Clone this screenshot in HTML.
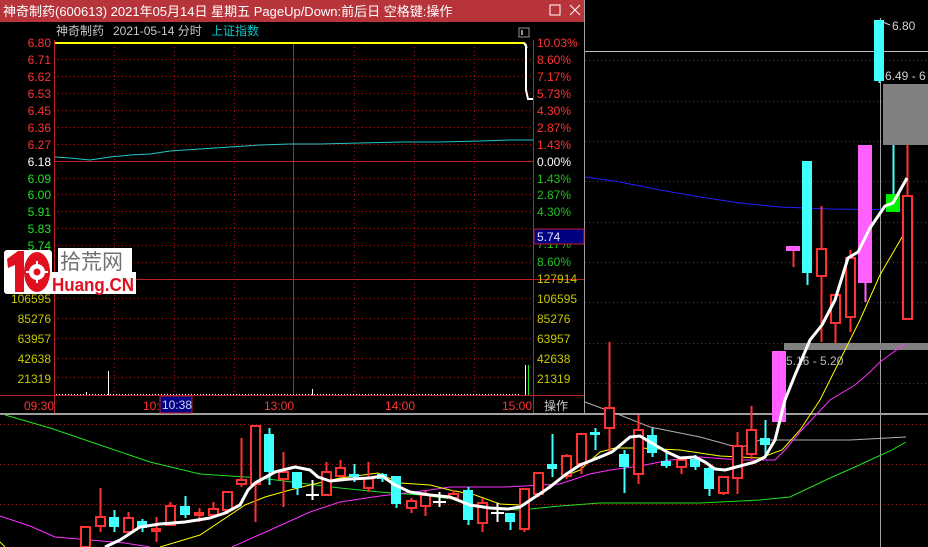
<!DOCTYPE html>
<html><head><meta charset="utf-8"><style>
html,body{margin:0;padding:0;background:#000;width:928px;height:547px;overflow:hidden}
svg{display:block}
text{font-family:"Liberation Sans","Noto Sans CJK SC",sans-serif;font-size:12px}
</style></head><body>
<svg id="s" width="928" height="547" xmlns="http://www.w3.org/2000/svg">
<rect width="928" height="547" fill="#000"/>
<g id="grid" stroke="#a01818" stroke-dasharray="1,3" stroke-width="1">
<line x1="585" y1="60.5" x2="928" y2="60.5"/><line x1="585" y1="101.5" x2="928" y2="101.5"/>
<line x1="585" y1="141.5" x2="928" y2="141.5"/><line x1="585" y1="181.5" x2="928" y2="181.5"/>
<line x1="585" y1="222.5" x2="928" y2="222.5"/><line x1="585" y1="262.5" x2="928" y2="262.5"/>
<line x1="585" y1="302.5" x2="928" y2="302.5"/><line x1="585" y1="343.5" x2="928" y2="343.5"/>
<line x1="585" y1="383.5" x2="928" y2="383.5"/>
<line x1="0" y1="424.5" x2="928" y2="424.5"/><line x1="0" y1="464.5" x2="928" y2="464.5"/>
<line x1="0" y1="504.5" x2="928" y2="504.5"/>
</g>
<line x1="585" y1="51.5" x2="928" y2="51.5" stroke="#c0c0c0"/>
<line x1="880.5" y1="18" x2="880.5" y2="547" stroke="#a0a0a0"/>
<line x1="0" y1="414" x2="928" y2="414" stroke="#a0a0a0" stroke-width="2"/>
<rect x="883" y="84" width="45" height="61" fill="#808080"/>
<rect x="784" y="343" width="144" height="7" fill="#808080"/>
<text x="786" y="365" fill="#b8b8b8">5.16 - 5.20</text>
<text x="885" y="80" fill="#d0d0d0">6.49 - 6</text>
<text x="892" y="30" fill="#d0d0d0">6.80</text>
<polyline points="883,22 890,25" stroke="#d0d0d0" fill="none"/>
<g fill="none" stroke-width="1">
<polyline stroke="#2020ff" points="585,177 620,182 660,190 700,197 740,203 780,207 830,209 905,210"/>
<polyline stroke="#b0b0b0" points="585,402 620,415 650,427 700,437 740,448 760,440 790,440 850,440 906,437"/>
<polyline stroke="#20e020" points="5,415 50,428 100,445 150,462 200,474 260,478 300,483 340,488 380,492 420,495 460,500 480,508 520,510 560,506 600,503 700,503 760,500 790,497 830,478 855,467 870,460 890,451 906,442"/>
<polyline stroke="#ff30ff" points="0,516 30,526 55,537 90,540 125,543 150,547"/>
<polyline stroke="#ff30ff" points="232,547 270,530 310,512 340,502 380,496 430,490 450,487 505,487 560,484 590,474 610,470 640,466 670,460 700,457 740,460 775,460 785,450 800,432 830,400 855,385 870,372 880,362 906,343"/>
<polyline stroke="#ffff00" points="0,542 5,547"/>
<polyline stroke="#ffff00" points="160,547 200,535 245,505 265,497 290,490 310,485 340,478 378,473 400,483 430,485 450,490 475,495 500,504 520,505 540,493 560,478 580,470 600,452 615,448 640,448 680,450 720,456 760,458 782,450 800,430 820,400 840,360 860,320 880,275 905,232"/>
</g>
<g id="c"></g>
<polyline fill="none" stroke="#fff" stroke-width="3" stroke-linejoin="round" points="105,547 120,540 140,527 160,524 185,522 210,518 225,513 240,505 248,490 255,483 275,472 295,467 310,470 318,477 330,481 350,479 370,478 382,476 395,485 410,492 430,495 450,497 470,505 490,508 508,509 520,507 535,497 550,487 565,475 580,465 600,457 612,452 630,437 640,436 650,442 667,452 680,458 695,457 705,462 715,469 725,470 740,466 755,462 765,457 775,440 785,400 795,375 810,340 822,325 835,300 848,258 858,252 870,228 885,206 893,203 907,178"/>

<!-- popup -->
<g>
<rect x="0" y="0" width="585" height="413" fill="#000"/>
<rect x="0" y="0" width="585" height="22" fill="#b7343a"/>
<text x="3" y="16" fill="#fff" style="font-size:13px">神奇制药(600613) 2021年05月14日 星期五 PageUp/Down:前后日 空格键:操作</text>
<rect x="550" y="5" width="10" height="10" fill="none" stroke="#fff"/>
<path d="M570 5 L580 15 M580 5 L570 15" stroke="#fff"/>
<line x1="584.5" y1="0" x2="584.5" y2="413" stroke="#a0a0a0"/>
<text x="56" y="35" fill="#c8c8c8">神奇制药</text>
<text x="113" y="35" fill="#c8c8c8">2021-05-14 分时</text>
<text x="211" y="35" fill="#00c8c8">上证指数</text>
<rect x="519" y="28" width="10" height="9" fill="none" stroke="#909090"/><rect x="521" y="30" width="2" height="5" fill="#909090"/>
<g stroke="#a01818" stroke-dasharray="1,3">
<line x1="54" y1="59.5" x2="533" y2="59.5"/><line x1="54" y1="76.5" x2="533" y2="76.5"/><line x1="54" y1="93.5" x2="533" y2="93.5"/>
<line x1="54" y1="110.5" x2="533" y2="110.5"/><line x1="54" y1="127.5" x2="533" y2="127.5"/><line x1="54" y1="144.5" x2="533" y2="144.5"/>
<line x1="54" y1="178.5" x2="533" y2="178.5"/><line x1="54" y1="194.5" x2="533" y2="194.5"/><line x1="54" y1="211.5" x2="533" y2="211.5"/>
<line x1="54" y1="228.5" x2="533" y2="228.5"/><line x1="54" y1="245.5" x2="533" y2="245.5"/><line x1="54" y1="262.5" x2="533" y2="262.5"/>
<line x1="54" y1="298.5" x2="533" y2="298.5"/><line x1="54" y1="318.5" x2="533" y2="318.5"/><line x1="54" y1="338.5" x2="533" y2="338.5"/>
<line x1="54" y1="358.5" x2="533" y2="358.5"/><line x1="54" y1="377.5" x2="533" y2="377.5"/>
<line x1="114.5" y1="43" x2="114.5" y2="395"/><line x1="174.5" y1="43" x2="174.5" y2="395"/><line x1="234.5" y1="43" x2="234.5" y2="395"/>
<line x1="354.5" y1="43" x2="354.5" y2="395"/><line x1="414.5" y1="43" x2="414.5" y2="395"/><line x1="474.5" y1="43" x2="474.5" y2="395"/>
</g>
<g stroke="#c02020">
<line x1="54.5" y1="40" x2="54.5" y2="413"/><line x1="533.5" y1="40" x2="533.5" y2="413"/>
<line x1="293.5" y1="43" x2="293.5" y2="395"/>
<line x1="54" y1="161.5" x2="533" y2="161.5"/><line x1="54" y1="279.5" x2="584" y2="279.5"/>
<line x1="0" y1="395.5" x2="584" y2="395.5"/>
</g>
<polyline fill="none" stroke="#ffff00" stroke-width="2" points="55,43 524,43 527,48"/>
<polyline fill="none" stroke="#fff" stroke-width="2" points="524,43 526,45 526,90 528,99 533,99"/>
<polyline fill="none" stroke="#20c8c8" points="55,157 70,158 90,160 110,157 130,155 150,154 170,151 200,149 230,147 260,145 290,144 320,144 360,143 400,142 440,142 480,141 510,140 533,140"/>
<g stroke="#fff">
<line x1="108.5" y1="371" x2="108.5" y2="395"/><line x1="525.5" y1="365" x2="525.5" y2="395"/>
<line x1="312.5" y1="389" x2="312.5" y2="395"/><line x1="86.5" y1="392" x2="86.5" y2="395"/>
<line x1="56" y1="394.5" x2="520" y2="394.5" stroke-dasharray="1,2"/>
</g>
<line x1="528.5" y1="365" x2="528.5" y2="395" stroke="#20e020"/>
<g text-anchor="end" fill="#ff3232">
<text x="51" y="47">6.80</text><text x="51" y="64">6.71</text><text x="51" y="81">6.62</text><text x="51" y="98">6.53</text>
<text x="51" y="115">6.45</text><text x="51" y="132">6.36</text><text x="51" y="149">6.27</text>
<text x="51" y="166" fill="#fff">6.18</text>
<text x="51" y="183" fill="#20e020">6.09</text><text x="51" y="199" fill="#20e020">6.00</text><text x="51" y="216" fill="#20e020">5.91</text>
<text x="51" y="233" fill="#20e020">5.83</text><text x="51" y="250" fill="#20e020">5.74</text>
<g fill="#c8c800"><text x="51" y="303">106595</text><text x="51" y="323">85276</text><text x="51" y="343">63957</text><text x="51" y="363">42638</text><text x="51" y="383">21319</text></g>
</g>
<g fill="#ff3232">
<text x="537" y="47">10.03%</text><text x="537" y="64">8.60%</text><text x="537" y="81">7.17%</text><text x="537" y="98">5.73%</text>
<text x="537" y="115">4.30%</text><text x="537" y="132">2.87%</text><text x="537" y="149">1.43%</text>
<text x="537" y="166" fill="#fff">0.00%</text>
<g fill="#20c020"><text x="537" y="183">1.43%</text><text x="537" y="199">2.87%</text><text x="537" y="216">4.30%</text><text x="537" y="248">7.17%</text><text x="537" y="266">8.60%</text></g>
<g fill="#c8c800"><text x="537" y="283">127914</text><text x="537" y="303">106595</text><text x="537" y="323">85276</text><text x="537" y="343">63957</text><text x="537" y="363">42638</text><text x="537" y="383">21319</text></g>
</g>
<rect x="534" y="229" width="50" height="15" fill="#000080" stroke="#c02020"/>
<text x="537" y="241" fill="#e0e0ff">5.74</text>
<g fill="#ff3232">
<text x="24" y="410">09:30</text><text x="143" y="410">10:</text><text x="264" y="410">13:00</text><text x="385" y="410">14:00</text><text x="502" y="410">15:00</text>
</g>
<rect x="160" y="396" width="32" height="17" fill="#000080" stroke="#c02020"/>
<text x="162" y="409" fill="#d0d0ff">10:38</text>
<text x="544" y="410" fill="#c8c8c8">操作</text>
<!-- logo -->
<rect x="58" y="248" width="74" height="24" fill="#fff"/>
<text x="60" y="269" fill="#707070" style="font-size:21px">拾荒网</text>
<rect x="50" y="272" width="86" height="22" fill="#fff"/>
<text x="52" y="291" fill="#e01020" textLength="82" lengthAdjust="spacingAndGlyphs" style="font-size:18px;font-weight:bold">Huang.CN</text>
<rect x="4" y="250" width="48" height="44" fill="#fff" rx="3"/>
<path d="M7 259 L18 251 L24 251 L24 292 L15 292 L15 265 L8 268 Z" fill="#e01020"/>
<ellipse cx="37" cy="272" rx="13" ry="20" fill="#e01020"/>
<circle cx="37" cy="272" r="8" fill="#fff"/>
<circle cx="37" cy="272" r="3.5" fill="#e01020"/>
<g stroke="#fff" stroke-width="2"><line x1="37" y1="261" x2="37" y2="264"/><line x1="37" y1="280" x2="37" y2="283"/><line x1="26" y1="272" x2="29" y2="272"/><line x1="45" y1="272" x2="48" y2="272"/></g>
</g>
</svg>
<script>
var d=[
[85,'r',527,547,527,547],[100,'r',517,526,488,532],[114,'c',517,527,510,532],[128,'r',518,532,512,535],[142,'c',521,528,519,532],
[156,'f',528,532,517,542],[170,'r',506,525,502,525],[185,'c',506,515,496,518],[199,'f',512,516,508,522],[213,'r',509,515,502,518],
[227,'r',492,510,491,514],[241,'r',480,484,438,487],[255,'r',426,484,426,522],[269,'c',434,472,428,485],[283,'r',472,479,452,507],
[297,'c',472,488,472,495],[312,'w',495,495,480,500],[326,'r',472,495,462,495],[340,'r',468,476,460,477],[354,'c',474,477,464,482],
[368,'r',478,488,462,492],[382,'c',474,479,473,482],[396,'c',476,504,476,508],[411,'r',501,508,498,513],[425,'r',495,506,491,516],
[439,'w',502,502,492,507],[453,'r',494,498,490,498],[468,'c',490,520,487,525],[482,'r',503,523,498,532],[497,'w',513,513,503,522],
[510,'c',513,522,513,530],[524,'r',489,529,488,532],[538,'r',473,494,473,497],[552,'c',464,469,434,477],[566,'r',456,476,454,479],
[581,'r',434,464,433,474],[595,'c',432,435,428,450],[609,'r',408,428,342,452],[624,'c',454,467,450,493],[638,'r',430,474,415,484],
[652,'c',435,453,428,457],[666,'c',461,466,450,468],[681,'r',460,467,459,474],[695,'c',459,467,455,470],[709,'c',468,489,467,496],
[723,'r',477,493,477,495],[737,'r',446,478,432,494],[751,'r',430,454,406,459],[765,'c',438,445,420,455],[779,'m',351,422,351,422],
[793,'m',246,251,246,267],[807,'c',161,273,161,285],[821,'r',249,276,206,342],[835,'r',295,323,295,343],[850,'r',258,317,250,332],
[865,'m',145,283,145,302],[879,'c',20,81,20,83],[893,'g',194,212,145,212],[907,'r',196,319,145,319]];
var h='';
d.forEach(function(a){var x=a[0],t=a[1],bt=a[2],bb=a[3],wt=a[4],wb=a[5];
var col={r:'#ff3232',f:'#ff3232',c:'#40ffff',m:'#ff60ff',g:'#00f000',w:'#fff'}[t];
var wc=(t=='m'&&x==793)?'#ff3232':(t=='g'?'#40ffff':col);
if(t=='w'){h+='<line x1="'+(x+.5)+'" y1="'+wt+'" x2="'+(x+.5)+'" y2="'+wb+'" stroke="#fff" stroke-width="2"/><line x1="'+(x-6)+'" y1="'+bt+'" x2="'+(x+7)+'" y2="'+bt+'" stroke="#fff" stroke-width="2"/>';return;}
var w=(t=='m'||t=='g')?14:10;
h+='<line x1="'+(x+.5)+'" y1="'+wt+'" x2="'+(x+.5)+'" y2="'+wb+'" stroke="'+wc+'" stroke-width="2"/>';
if(t=='r')h+='<rect x="'+(x-w/2+1)+'" y="'+bt+'" width="'+(w-1)+'" height="'+Math.max(bb-bt,2)+'" fill="#000" stroke="'+col+'" stroke-width="2"/>';
else h+='<rect x="'+(x-w/2)+'" y="'+bt+'" width="'+w+'" height="'+Math.max(bb-bt,2)+'" fill="'+col+'"/>';});
document.getElementById('c').innerHTML=h;
</script>
</body></html>
